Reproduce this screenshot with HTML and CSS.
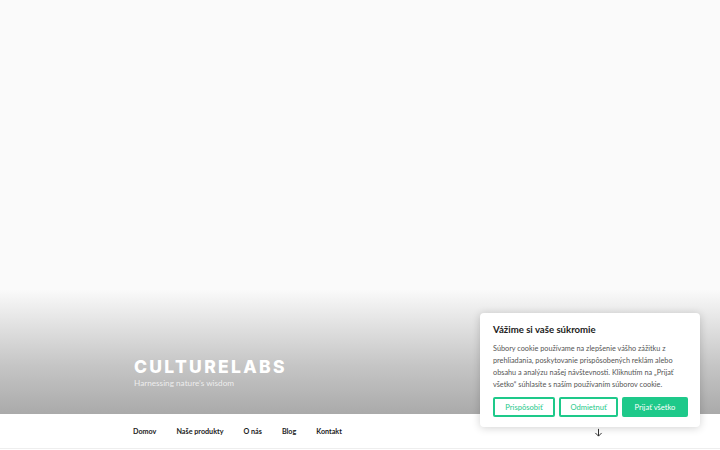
FILE: index.html
```html
<!DOCTYPE html>
<html lang="sk">
<head>
<meta charset="utf-8">
<title>CultureLabs</title>
<link rel="stylesheet" href="styles.css">
</head>
<body>
<header class="masthead">
  <div class="branding">
    <h1 class="site-title">CULTURELABS</h1>
    <p class="site-desc">Harnessing nature’s wisdom</p>
  </div>
</header>
<nav class="nav">
  <ul class="menu">
    <li>Domov</li>
    <li>Naše produkty</li>
    <li>O nás</li>
    <li>Blog</li>
    <li>Kontakt</li>
  </ul>
  <svg class="arrow" width="9" height="9" viewBox="0 0 10 10"><path d="M5 1v8M1.5 5.5L5 9l3.5-3.5" fill="none" stroke="#333" stroke-width="1.1"/></svg>
</nav>
<div class="cookie">
  <p class="cookie-title">Vážime si vaše súkromie</p>
  <p class="cookie-text">Súbory cookie používame na zlepšenie vášho zážitku z prehliadania, poskytovanie prispôsobených reklám alebo obsahu a analýzu našej návštevnosti. Kliknutím na „Prijať všetko“ súhlasíte s naším používaním súborov cookie.</p>
  <div class="cookie-btns">
    <button class="btn outline">Prispôsobiť</button>
    <button class="btn outline">Odmietnuť</button>
    <button class="btn solid">Prijať všetko</button>
  </div>
</div>
</body>
</html>
```
FILE: styles.css
```css
html, body { margin: 0; padding: 0; }
body {
  width: 720px;
  height: 450px;
  overflow: hidden;
  background: #fff;
  font-family: "Lato", "Liberation Sans", sans-serif;
  position: relative;
}
.masthead {
  height: 414px;
  background: linear-gradient(to bottom, #fafafa 0%, #fafafa 70%, #c6c6c6 88%, #aaaaaa 100%);
  display: flex;
  flex-direction: column;
  justify-content: flex-end;
}
.branding { padding: 0 0 25px 134px; }
.site-title {
  margin: 0;
  color: #fff;
  font-family: "Inter", "Liberation Sans", sans-serif;
  font-weight: 800;
  font-size: 17.5px;
  letter-spacing: 2.3px;
  line-height: 20px;
}
.site-desc {
  margin: 1px 0 0;
  color: rgba(255,255,255,0.75);
  font-size: 8.2px;
  line-height: 11px;
}
.nav {
  height: 34px;
  border-bottom: 1px solid #eee;
  display: flex;
  align-items: center;
  padding-left: 133px;
  position: relative;
}
.menu {
  list-style: none;
  margin: 0;
  padding: 0;
  display: flex;
  gap: 20px;
}
.menu li {
  font-size: 7.2px;
  font-weight: 700;
  color: #222;
}
.arrow { position: absolute; left: 594px; top: 14px; }
.cookie {
  position: absolute;
  left: 480px;
  top: 313px;
  width: 220px;
  box-sizing: border-box;
  padding: 10px 7px 10px 13px;
  background: #fff;
  border-radius: 4px;
  box-shadow: 0 1px 8px rgba(0,0,0,0.18);
}
.cookie-title {
  margin: 0 0 6px;
  font-size: 9.6px;
  font-weight: 700;
  color: #212121;
  line-height: 14px;
}
.cookie-text {
  margin: 0 0 6px;
  font-size: 7.3px;
  line-height: 12px;
  color: #555;
}
.cookie-btns { display: flex; gap: 4px; }
.btn {
  height: 20px;
  box-sizing: border-box;
  font-family: inherit;
  font-size: 7.6px;
  border-radius: 2px;
  border: 2px solid #1ec98a;
  padding: 0;
  cursor: pointer;
}
.outline { background: #fff; color: #1ec98a; width: 62px; }
.outline + .outline { width: 59px; }
.solid { background: #1ec98a; color: #fff; width: 66px; }
```
